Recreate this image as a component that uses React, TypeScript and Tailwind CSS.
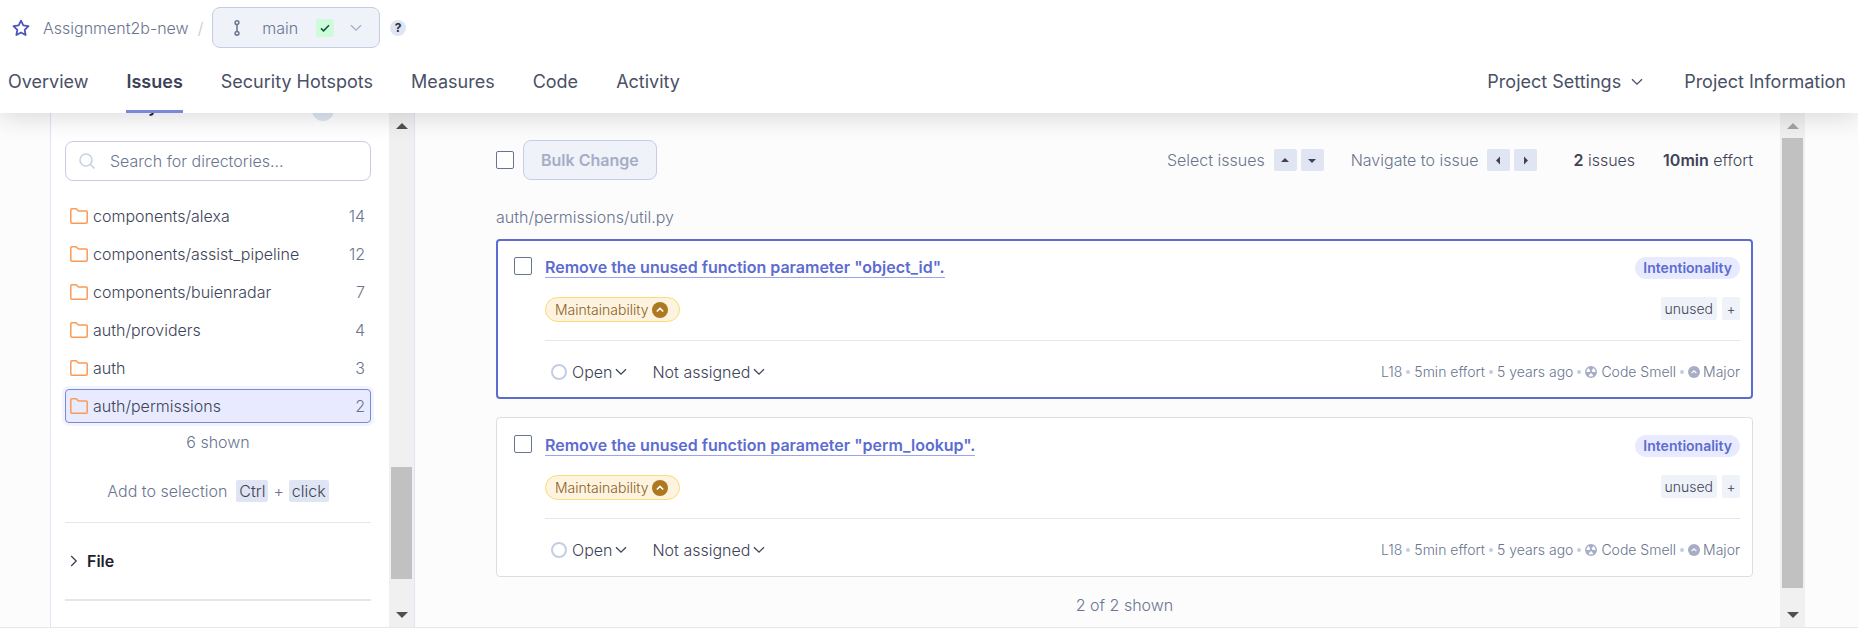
import React from "react";

type Direction = "up" | "down" | "left" | "right";

const directories = [
  { name: "components/alexa", count: 14 },
  { name: "components/assist_pipeline", count: 12 },
  { name: "components/buienradar", count: 7 },
  { name: "auth/providers", count: 4 },
  { name: "auth", count: 3 },
  { name: "auth/permissions", count: 2, selected: true },
];

const issues = [
  { id: "object-id", title: 'Remove the unused function parameter "object_id".', selected: true },
  { id: "perm-lookup", title: 'Remove the unused function parameter "perm_lookup".', selected: false },
];

function Chevron({ className = "" }: { className?: string }) {
  return (
    <svg viewBox="0 0 12 8" className={`h-2 w-3 shrink-0 ${className}`} fill="none" stroke="currentColor" strokeWidth="1.3" aria-hidden="true">
      <path d="M1 1.2 6 6.2l5-5" />
    </svg>
  );
}

const trianglePoints: Record<Direction, string> = {
  up: "1,6 5,2 9,6",
  down: "1,3 5,7 9,3",
  left: "6,0.5 2,4.5 6,8.5",
  right: "3,0.5 7,4.5 3,8.5",
};

function Triangle({ direction, className = "" }: { direction: Direction; className?: string }) {
  return (
    <svg viewBox="0 0 10 9" className={className} fill="currentColor" aria-hidden="true">
      <polygon points={trianglePoints[direction]} />
    </svg>
  );
}

function FolderIcon() {
  return (
    <svg viewBox="0 0 18 16" className="h-4 w-[18px] shrink-0" fill="none" stroke="#f99b57" strokeWidth="1.5" strokeLinejoin="round" aria-hidden="true">
      <path d="M.8 14.2V1.8q0-1 1-1h4q.6 0 1 .5l1 1.2q.4.4 1 .4h7.400q1 0 1 1v10.300q0 1-1 1H1.800q-1 0-1-1Z" />
    </svg>
  );
}

function SeverityIcon({ className = "" }: { className?: string }) {
  return (
    <svg viewBox="0 0 16 16" className={`shrink-0 ${className}`} aria-hidden="true">
      <circle cx="8" cy="8" r="8" fill="currentColor" />
      <path d="m4.800 9.500 3.200-3 3.200 3" fill="none" stroke="#fff" strokeWidth="1.700" />
    </svg>
  );
}

function CodeSmellIcon() {
  return (
    <svg viewBox="0 0 12 12" className="size-3 shrink-0 text-[#a6adc5]" aria-hidden="true">
      <circle cx="6" cy="6" r="5.300" fill="#fff" stroke="currentColor" strokeWidth="1.400" />
      <circle cx="6" cy="6" r="1.500" fill="currentColor" />
      <path
        d="M6 6h5.200A5.200 5.200 0 0 1 8.600 10.500ZM6 6 3.400 10.500A5.200 5.200 0 0 1 .8 6ZM6 6 3.400 1.500a5.200 5.200 0 0 1 5.200 0Z"
        fill="currentColor"
      />
    </svg>
  );
}

function Scrollbar({ thumb, offset, upDisabled = false }: { thumb: string; offset: string; upDisabled?: boolean }) {
  return (
    <div className="flex w-[25px] shrink-0 flex-col bg-[#f0f0f0]" aria-hidden="true">
      <div className="flex h-[25px] shrink-0 items-center justify-center">
        <svg viewBox="0 0 12 6" className={`h-1.5 w-3 ${upDisabled ? "text-[#a3a3a3]" : "text-[#505050]"}`} fill="currentColor">
          <polygon points="0,6 6,0 12,6" />
        </svg>
      </div>
      <div className="flex min-h-0 flex-1 flex-col items-center">
        <div className={`shrink-0 ${offset}`} />
        <div className={`w-[21px] shrink-0 bg-[#c1c1c1] ${thumb}`} />
      </div>
      <div className="flex h-[25px] shrink-0 items-center justify-center">
        <svg viewBox="0 0 12 6" className="h-1.5 w-3 text-[#505050]" fill="currentColor">
          <polygon points="0,0 6,6 12,0" />
        </svg>
      </div>
    </div>
  );
}

function Checkbox({ label }: { label: string }) {
  return (
    <input
      type="checkbox"
      aria-label={label}
      className="size-[18px] shrink-0 appearance-none rounded-xs border border-[#69758f] bg-white checked:bg-[#5d6cd0]"
    />
  );
}

function KeyHint({ direction }: { direction: Direction }) {
  return (
    <kbd className="flex h-[22px] w-[23px] items-center justify-center rounded-xs bg-[#dfe5f2] text-[#3e4357]">
      <Triangle direction={direction} className="h-[9px] w-2.5" />
    </kbd>
  );
}

function Header() {
  const tabs = ["Overview", "Issues", "Security Hotspots", "Measures", "Code", "Activity"];
  return (
    <header className="relative z-10 shrink-0 bg-white pt-[7px] shadow-[0_4px_24px_rgba(29,33,47,0.16)]">
      <div className="flex h-[41px] items-center pl-3 text-[#6a7590]">
        <button type="button" aria-label="Add to favorites" className="mr-[13px]">
          <svg viewBox="0 0 18 18" className="size-[18px]" fill="none" stroke="#4b56bb" strokeWidth="1.800" strokeLinejoin="round" aria-hidden="true">
            <path d="m9 1.600 2.300 4.800 5.200.7-3.800 3.700.9 5.200L9 13.500 4.400 16l.9-5.200L1.500 7.100l5.200-.7Z" />
          </svg>
        </button>
        <a href="#project" className="text-base">Assignment2b-new</a>
        <span className="mx-[9px] text-base text-[#c3c8d4]">/</span>
        <button type="button" className="flex h-[41px] items-center rounded-lg border border-[#c4cde2] bg-[#eff2f9] pr-[17px] pl-[21px] text-base">
          <svg viewBox="0 0 6 16" className="mr-[22px] h-4 w-1.5" fill="none" stroke="currentColor" strokeWidth="1.500" aria-hidden="true">
            <circle cx="3" cy="2.700" r="1.900" />
            <circle cx="3" cy="13.300" r="1.900" />
            <path d="M3 4.600v6.800" />
          </svg>
          main
          <span className="mr-4 ml-[18px] flex size-[18px] items-center justify-center rounded-xs bg-[#cffbdd]">
            <svg viewBox="0 0 12 10" className="h-2 w-2.5" fill="none" stroke="#0a5f33" strokeWidth="2" aria-hidden="true">
              <path d="m1 5.500 3.200 3L11 1.500" />
            </svg>
          </span>
          <Chevron className="text-[#a6adc5]" />
        </button>
        <button type="button" aria-label="Help" className="ml-2.5 flex size-4 items-center justify-center rounded-full bg-[#dfe5f2] text-xs font-bold text-[#2a2f40]">
          ?
        </button>
      </div>
      <div className="flex justify-between pr-3 pl-2 text-lg font-normal text-[#4a5066]">
        <nav className="flex gap-[38px]">
          {tabs.map((tab) => (
            <a
              key={tab}
              href="#tab"
              className={`h-[65px] border-b-[3px] pt-5 ${tab === "Issues" ? "border-[#7b87d9] font-semibold text-[#3e4357]" : "border-transparent"}`}
            >
              {tab}
            </a>
          ))}
        </nav>
        <div className="flex gap-[41px] pt-5">
          <button type="button" className="flex h-7 items-center gap-2.5">
            Project Settings
            <Chevron />
          </button>
          <a href="#information">Project Information</a>
        </div>
      </div>
    </header>
  );
}

function Sidebar() {
  return (
    <aside className="flex w-[365px] shrink-0 border-x border-[#dfe5f2] bg-white text-base leading-5">
      <div className="min-w-0 flex-1 overflow-hidden pr-[18px] pl-3.5">
        <div className="-mt-3.5 flex h-[22px] items-center pr-[37px] pl-[21px]">
          <h3 className="flex-1 pb-2 font-semibold text-[#1d212f]">Directory</h3>
          <span className="size-[22px] rounded-full bg-[#dfe5f2]" />
        </div>
        <label className="mt-5 flex h-10 items-center rounded-lg border border-[#c4cde2] pl-[13px]">
          <svg viewBox="0 0 16 16" className="size-4 shrink-0" fill="none" stroke="#c9d2e5" strokeWidth="1.600" aria-hidden="true">
            <circle cx="7" cy="7" r="6" />
            <path d="m11.300 11.300 4.200 4.200" />
          </svg>
          <input
            type="text"
            aria-label="Search for directories"
            placeholder="Search for directories..."
            className="ml-[15px] min-w-0 flex-1 bg-transparent font-light outline-none placeholder:text-[#6a7590]"
          />
        </label>
        <ul className="mt-[18px] flex flex-col gap-1">
          {directories.map((directory) => (
            <li key={directory.name}>
              <button
                type="button"
                className={`flex h-[34px] w-full items-center rounded border pr-[5px] pb-px pl-1 ${
                  directory.selected ? "border-[#7b87d9] bg-[#e8ebff] shadow-[0_0_0_3px_#f3f4fa]" : "border-transparent"
                }`}
              >
                <FolderIcon />
                <span className="ml-[5px] flex-1 text-left text-[#3e4357]">{directory.name}</span>
                <span className="text-[#6a7590]">{directory.count}</span>
              </button>
            </li>
          ))}
        </ul>
        <p className="mt-[9px] text-center text-[#6a7590]">6 shown</p>
        <p className="mt-7 flex items-center justify-center text-[#6a7590]">
          Add to selection
          <kbd className="ml-[9px] rounded-xs bg-[#dfe5f2] px-[3px] py-px text-[#3e4357] [font-family:inherit]">Ctrl</kbd>
          <span className="mx-[5px]">+</span>
          <kbd className="rounded-xs bg-[#dfe5f2] px-[3px] py-px text-[#3e4357] [font-family:inherit]">click</kbd>
        </p>
        <hr className="mt-5 border-[#e6e7ea]" />
        <button type="button" className="flex h-[76px] w-full items-center gap-[7px] pl-[3px] font-semibold text-[#1d212f]">
          <Chevron className="-rotate-90 text-[#3e4357]" />
          File
        </button>
        <hr className="border-t-2 border-[#e6e7ea]" />
      </div>
      <Scrollbar offset="h-[71%]" thumb="h-[24%]" />
    </aside>
  );
}

function Dot() {
  return <span className="mx-1 size-1 rounded-full bg-[#c4cde2]" />;
}

function IssueCard({ title, selected }: { title: string; selected: boolean }) {
  return (
    <li
      className={`flex gap-[13px] rounded bg-white ${
        selected ? "border-2 border-[#5d6cd0] pt-4 pr-[11px] pb-[15px] pl-4" : "border border-[#dddee3] pt-[17px] pr-3 pb-4 pl-[17px]"
      }`}
    >
      <Checkbox label={`Select issue: ${title}`} />
      <div className="min-w-0 flex-1">
        <div className="flex items-start justify-between">
          <a href="#issue" className="border-b border-[#9ba5ea] text-base leading-5 font-semibold text-[#5d6cd0]">
            {title}
          </a>
          <span className="rounded-full bg-[#e8ebff] px-2 text-sm leading-[22px] font-semibold text-[#5d6cd0]">Intentionality</span>
        </div>
        <div className="mt-[18px] flex items-start justify-between text-sm">
          <button type="button" className="flex h-[25px] items-center gap-1 rounded-full border border-[#fadc79] bg-[#fdf3df] pr-[11px] pl-[9px] text-[#8c5e1e]">
            Maintainability
            <SeverityIcon className="size-4 text-[#ad7820]" />
          </button>
          <div className="flex gap-[5px] text-[#3e4357]">
            <span className="rounded-xs bg-[#eff2f9] px-1 leading-[23px]">unused</span>
            <button type="button" aria-label="Add tag" className="w-[18px] rounded-xs bg-[#eff2f9] leading-[23px]">+</button>
          </div>
        </div>
        <div className="mt-[18px] flex items-center justify-between border-t border-[#e6e7ea] pt-[21px]">
          <div className="flex text-base leading-5 text-[#3e4357]">
            <button type="button" className="ml-1.5 flex items-center">
              <span className="mr-[5px] size-4 rounded-full border-2 border-[#c4cde2]" />
              Open
              <Chevron className="ml-[3px]" />
            </button>
            <button type="button" className="ml-[25px] flex items-center">
              Not assigned
              <Chevron className="ml-[3px]" />
            </button>
          </div>
          <div className="flex items-center text-sm leading-5 text-[#6a7590]">
            L18
            <Dot />
            5min effort
            <Dot />
            5 years ago
            <Dot />
            <span className="flex items-center gap-1">
              <CodeSmellIcon />
              Code Smell
            </span>
            <Dot />
            <span className="flex items-center gap-[3px]">
              <SeverityIcon className="size-3 text-[#a6adc5]" />
              Major
            </span>
          </div>
        </div>
      </div>
    </li>
  );
}

export default function App() {
  return (
    <div className="flex h-screen min-h-[600px] flex-col bg-[#fcfcfc] font-light [font-family:Inter,'Liberation_Sans',sans-serif]">
      <Header />
      <div className="flex min-h-0 flex-1 border-b border-[#e6e7ea] pr-[53px] pl-[50px]">
        <Sidebar />
        <main className="min-w-0 flex-1 overflow-hidden pt-[27px] pr-[27px] pl-[81px] text-base leading-5">
          <div className="flex h-10 items-center">
            <Checkbox label="Select all issues" />
            <button type="button" disabled className="ml-[9px] h-10 rounded-lg border border-[#c4cde2] bg-[#eff2f9] px-[17px] font-semibold text-[#a6adc5]">
              Bulk Change
            </button>
            <div className="ml-auto flex items-center whitespace-nowrap text-[#6a7590]">
              <span className="mr-[9px]">Select issues</span>
              <span className="flex gap-1">
                <KeyHint direction="up" />
                <KeyHint direction="down" />
              </span>
              <span className="mr-[9px] ml-[27px]">Navigate to issue</span>
              <span className="flex gap-1">
                <KeyHint direction="left" />
                <KeyHint direction="right" />
              </span>
              <span className="ml-9 text-[#3e4357]">
                <strong className="font-semibold">2</strong> issues
              </span>
              <span className="ml-7 text-[#3e4357]">
                <strong className="font-semibold">10min</strong> effort
              </span>
            </div>
          </div>
          <h2 className="mt-[27px] text-[#6a7590]">auth/permissions/util.py</h2>
          <ul className="mt-3 flex flex-col gap-[18px]">
            {issues.map((issue) => (
              <IssueCard key={issue.id} title={issue.title} selected={issue.selected} />
            ))}
          </ul>
          <p className="mt-[18px] text-center text-[#6a7590]">2 of 2 shown</p>
        </main>
        <Scrollbar offset="h-0" thumb="h-[97%]" upDisabled />
      </div>
    </div>
  );
}
